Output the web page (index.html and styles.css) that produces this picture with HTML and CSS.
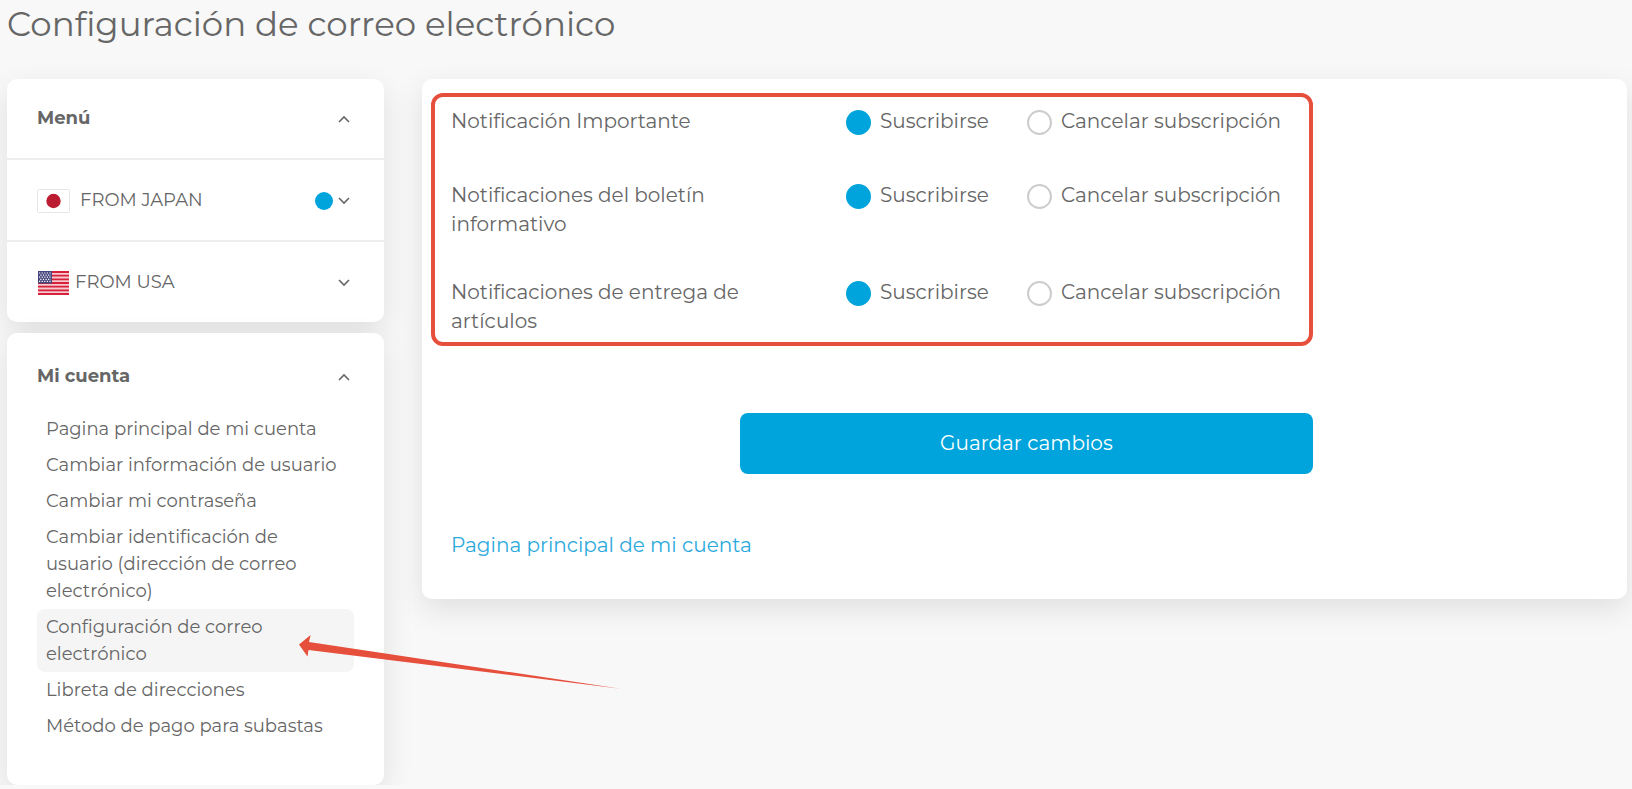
FILE: index.html
```html
<!DOCTYPE html>
<html lang="es">
<head>
  <meta charset="UTF-8" />
  <meta name="viewport" content="width=device-width, initial-scale=1.0"/>
  <title>Configuración de correo electrónico</title>
  <link rel="stylesheet" href="styles.css">
</head>
<body>
  <h1>Configuración de correo electrónico</h1>

  <div class="layout">
    <aside class="sidebar">
      <nav class="card menu">
        <button type="button" class="menu-row menu-title">
          <span>Menú</span>
          <svg class="chevron" viewBox="0 0 12 8"><path d="M1 7L6 2L11 7"/></svg>
        </button>
        <button type="button" class="menu-row">
          <svg class="flag" viewBox="0 0 33 24">
            <rect x="0.5" y="0.5" width="32" height="23" rx="1" fill="#fff" stroke="#e6e6e6"/>
            <circle cx="16.5" cy="12" r="7.2" fill="#bc1c31"/>
          </svg>
          <span class="japan">FROM JAPAN</span>
          <span class="dot"></span>
          <svg class="chevron" viewBox="0 0 12 8"><path d="M1 1L6 6L11 1"/></svg>
        </button>
        <button type="button" class="menu-row">
          <svg class="flag" viewBox="0 0 33 24">
            <rect x="1" y="0" width="31" height="24" fill="#f6c9cf"/>
            <path stroke="#d8213b" stroke-width="1.8" d="M1 1H32M1 4.7H32M1 8.4H32M1 12H32M1 15.7H32M1 19.4H32M1 23H32"/>
            <rect x="1" y="0" width="14" height="12.5" fill="#46467f"/>
            <path stroke="#fff" stroke-width="1.2" stroke-dasharray="1.2 1.4" d="M2 2H14M3.3 4.1H14M2 6.2H14M3.3 8.3H14M2 10.4H14"/>
          </svg>
          <span>FROM USA</span>
          <svg class="chevron" viewBox="0 0 12 8"><path d="M1 1L6 6L11 1"/></svg>
        </button>
      </nav>

      <nav class="card account">
        <button type="button" class="menu-row menu-title">
          <span>Mi cuenta</span>
          <svg class="chevron" viewBox="0 0 12 8"><path d="M1 7L6 2L11 7"/></svg>
        </button>
        <ul>
          <li><a href="#">Pagina principal de mi cuenta</a></li>
          <li><a href="#">Cambiar información de usuario</a></li>
          <li><a href="#">Cambiar mi contraseña</a></li>
          <li><a href="#">Cambiar identificación de usuario (dirección de correo electrónico)</a></li>
          <li class="active">
            <a href="#">Configuración de correo electrónico</a>
            <svg class="arrow" viewBox="0 0 322 54"><path d="M0 9.5L11.6 0L10 7L321.500 53.700L9.500 15L8.500 21.500Z"/></svg>
          </li>
          <li><a href="#">Libreta de direcciones</a></li>
          <li><a href="#">Método de pago para subastas</a></li>
        </ul>
      </nav>
    </aside>

    <main class="card content">
      <form>
        <div class="notifications">
          <div class="row" role="radiogroup" aria-labelledby="important">
            <span class="name" id="important">Notificación Importante</span>
            <label><input type="radio" name="important" checked> Suscribirse</label>
            <label><input type="radio" name="important"> Cancelar subscripción</label>
          </div>
          <div class="row" role="radiogroup" aria-labelledby="newsletter">
            <span class="name" id="newsletter">Notificaciones del boletín informativo</span>
            <label><input type="radio" name="newsletter" checked> Suscribirse</label>
            <label><input type="radio" name="newsletter"> Cancelar subscripción</label>
          </div>
          <div class="row" role="radiogroup" aria-labelledby="delivery">
            <span class="name" id="delivery">Notificaciones de entrega de artículos</span>
            <label><input type="radio" name="delivery" checked> Suscribirse</label>
            <label><input type="radio" name="delivery"> Cancelar subscripción</label>
          </div>
        </div>
        <button type="submit" class="save">Guardar cambios</button>
      </form>
      <a class="back" href="#">Pagina principal de mi cuenta</a>
    </main>
  </div>
</body>
</html>
```
FILE: styles.css
```css
* {
  box-sizing: border-box;
}

body {
  margin: 0;
  padding: 0 5px 0 7px;
  background: #f8f8f8;
  color: #666;
  font-family: Montserrat, Inter, sans-serif;
  font-size: 20px;
  line-height: 29px;
}

h1 {
  margin: 0 0 31px;
  font-size: 34px;
  font-weight: 400;
  line-height: 48px;
}

.layout {
  display: flex;
  align-items: flex-start;
  gap: 38px;
}

.card {
  background: #fff;
  border-radius: 10px;
  box-shadow: 0 10px 30px rgba(0, 0, 0, 0.1);
}

a {
  color: inherit;
  text-decoration: none;
}

button {
  border: none;
  background: none;
  color: inherit;
  font: inherit;
  cursor: pointer;
}

/* sidebar */
.sidebar {
  flex: 0 0 377px;
  display: flex;
  flex-direction: column;
  gap: 11px;
  font-size: 18px;
  line-height: 27px;
}

.menu-row {
  display: flex;
  align-items: center;
  gap: 5px;
  width: 100%;
  padding: 27px 34px 26px 30px;
}

.menu .menu-row + .menu-row {
  border-top: 2px solid #eee;
}

.menu-title {
  padding: 26px 34px 26px 30px;
  font-weight: 700;
}

.account .menu-title {
  padding: 30px 34px 21px 30px;
}

.flag {
  width: 33px;
  height: 24px;
}

.japan {
  margin-left: 5px;
}

.dot {
  width: 18px;
  height: 18px;
  margin-left: auto;
  border-radius: 50%;
  background: #00a4dc;
}

.chevron {
  width: 12px;
  height: 8px;
  margin-left: auto;
  fill: none;
  stroke: #666;
  stroke-width: 1.6;
}

.dot + .chevron {
  margin-left: 0;
}

.account ul {
  margin: 0;
  padding: 0 30px 41px;
  list-style: none;
}

.account li {
  position: relative;
  border-radius: 8px;
}

.account li a {
  display: block;
  padding: 5px 9px 4px;
}

.account .active {
  background: #f5f5f5;
}

.arrow {
  position: absolute;
  left: 262px;
  top: 26px;
  width: 322px;
  height: 54px;
  fill: #e64f3c;
}

/* settings form */
.content {
  flex: 1;
  padding: 14px 9px 39px;
}

form {
  max-width: 882px;
}

.notifications {
  display: flex;
  flex-direction: column;
  gap: 39px;
  padding: 10px 16px 6px;
  border: 4px solid #e64f3c;
  border-radius: 12px;
}

.row {
  display: grid;
  grid-template-columns: 395px 181px 1fr;
  align-items: start;
  min-height: 35px;
}

.name {
  padding-right: 85px;
}

.row label {
  display: flex;
  align-items: center;
  gap: 9px;
  white-space: nowrap;
}

input[type="radio"] {
  appearance: none;
  width: 25px;
  height: 25px;
  margin: 2px 0 0;
  border: 2px solid #ccc;
  border-radius: 50%;
  background: #fff;
}

input[type="radio"]:checked {
  border-color: #00a4dc;
  background: #00a4dc;
}

.save {
  display: block;
  width: 65%;
  margin: 67px 0 57px auto;
  padding: 16px;
  border-radius: 8px;
  background: #00a4dc;
  color: #fff;
}

.back {
  display: block;
  padding-left: 20px;
  color: #2ba9dc;
}
```
